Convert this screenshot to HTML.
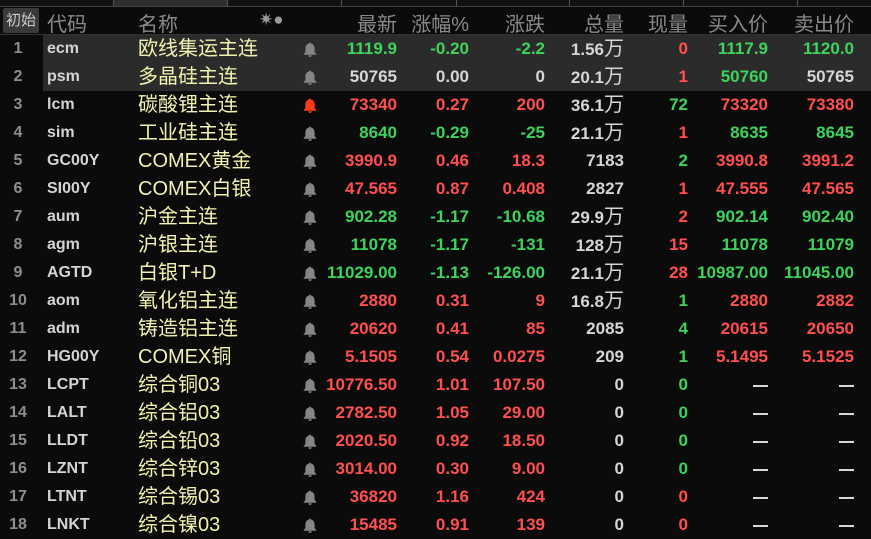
<!DOCTYPE html>
<html><head><meta charset="utf-8"><style>
body{margin:0;width:871px;height:535px;background:#0b0b0b;overflow:hidden;position:relative;font-family:"Liberation Sans","Noto Sans CJK SC",sans-serif}
.strip{position:absolute;left:0;top:0;width:871px;height:6px;background:#111;border-bottom:1px solid #444}
.strip i{position:absolute;top:0;width:1px;height:6px;background:#555}
.hdr{position:absolute;top:7px;left:0;width:871px;height:27px;border-bottom:1px solid #333;color:#8a8a8a;font-size:20px}
.hdr span,.row span{position:absolute;white-space:nowrap}
.btn{position:absolute;left:3px;top:1px;width:36px;height:25px;background:#3a3a3a;color:#ccc;font-size:15px;line-height:25px;text-align:center;border-radius:2px}
.row{position:absolute;left:0;width:871px;height:28px;line-height:28px}
.hl{position:absolute;left:43px;right:0;top:0;bottom:0;background:#2b2b2b}
.n{color:#8e8e8e;font-size:16px;font-weight:bold;left:0;width:36px;text-align:center}
.c{color:#d4d4d4;font-size:16px;font-weight:bold;left:47px}
.nm{color:#f2f2b0;font-size:20px;left:138px}
.bell{left:303px;top:7px;width:14px;height:15px}
.v{font-size:17px;font-weight:bold;text-align:right}
.g{color:#3ed35c}.r{color:#ff4f4f}.w{color:#d6d6d6}
.a{right:474px}.b{right:402px}.d{right:326px}.e{right:247px}.f{right:183px}.h{right:103px}.k{right:17px}
.dash{display:inline-block;width:15px;height:2px;background:#d6d6d6;vertical-align:middle}
</style></head><body>
<div class="strip"><div style="position:absolute;left:114px;width:113px;top:0;height:6px;background:#2e2e2e"></div><i style="left:113px"></i><i style="left:227px"></i><i style="left:341px"></i><i style="left:456px"></i><i style="left:569px"></i><i style="left:683px"></i><i style="left:797px"></i></div>
<div class="hdr">
<div class="btn">初始</div>
<span style="left:47px;top:1px">代码</span>
<span style="left:138px;top:1px">名称</span>
<span style="left:259px;top:3px;font-size:17px;color:#999">✷●</span>
<span style="right:474px;top:1px">最新</span>
<span style="right:402px;top:1px">涨幅%</span>
<span style="right:326px;top:1px">涨跌</span>
<span style="right:247px;top:1px">总量</span>
<span style="right:183px;top:1px">现量</span>
<span style="right:103px;top:1px">买入价</span>
<span style="right:17px;top:1px">卖出价</span>
</div>
<div id="rows"></div>
<script>
var D=[
["ecm","欧线集运主连",0,"1119.9g","-0.20g","-2.2g","1.56万w","0r","1117.9g","1120.0g"],
["psm","多晶硅主连",0,"50765w","0.00w","0w","20.1万w","1r","50760g","50765w"],
["lcm","碳酸锂主连",1,"73340r","0.27r","200r","36.1万w","72g","73320r","73380r"],
["sim","工业硅主连",0,"8640g","-0.29g","-25g","21.1万w","1r","8635g","8645g"],
["GC00Y","COMEX黄金",0,"3990.9r","0.46r","18.3r","7183w","2g","3990.8r","3991.2r"],
["SI00Y","COMEX白银",0,"47.565r","0.87r","0.408r","2827w","1r","47.555r","47.565r"],
["aum","沪金主连",0,"902.28g","-1.17g","-10.68g","29.9万w","2r","902.14g","902.40g"],
["agm","沪银主连",0,"11078g","-1.17g","-131g","128万w","15r","11078g","11079g"],
["AGTD","白银T+D",0,"11029.00g","-1.13g","-126.00g","21.1万w","28r","10987.00g","11045.00g"],
["aom","氧化铝主连",0,"2880r","0.31r","9r","16.8万w","1g","2880r","2882r"],
["adm","铸造铝主连",0,"20620r","0.41r","85r","2085w","4g","20615r","20650r"],
["HG00Y","COMEX铜",0,"5.1505r","0.54r","0.0275r","209w","1g","5.1495r","5.1525r"],
["LCPT","综合铜03",0,"10776.50r","1.01r","107.50r","0w","0g","—w","—w"],
["LALT","综合铝03",0,"2782.50r","1.05r","29.00r","0w","0g","—w","—w"],
["LLDT","综合铅03",0,"2020.50r","0.92r","18.50r","0w","0g","—w","—w"],
["LZNT","综合锌03",0,"3014.00r","0.30r","9.00r","0w","0g","—w","—w"],
["LTNT","综合锡03",0,"36820r","1.16r","424r","0w","0r","—w","—w"],
["LNKT","综合镍03",0,"15485r","0.91r","139r","0w","0r","—w","—w"]];
var cls=["a","b","d","e","f","h","k"],h="";
D.forEach(function(r,i){
h+='<div class="row" style="top:'+(35+28*i)+'px">'+(i<2?'<div class="hl"></div>':'')+
'<span class="n">'+(i+1)+'</span><span class="c">'+r[0]+'</span><span class="nm">'+r[1]+'</span>'+
'<svg class="bell" style="position:absolute" viewBox="0 0 12 13"><path d="M6 0.5c0.6 0 1 .4 1 .9 2 .5 3 2.2 3 4.3v3l1.5 1.8v.5H0.5v-.5L2 8.7v-3c0-2.1 1-3.8 3-4.3 0-.5.4-.9 1-.9zM4.5 11.5h3c0 .9-.7 1.5-1.5 1.5s-1.5-.6-1.5-1.5z" fill="'+(r[2]?'#ff3b1a':'#858585')+'"/></svg>';
for(var j=0;j<7;j++){var s=r[3+j];var t=s.slice(0,-1);var c=s.slice(-1);
h+='<span class="v '+cls[j]+' '+c+'">'+(t=="—"?'<span class="dash" style="position:static"></span>':t.replace("万",'<span style="position:static;font-weight:normal;font-size:20px">万</span>'))+'</span>';}
h+='</div>';});
document.getElementById("rows").innerHTML=h;
</script>
</body></html>
